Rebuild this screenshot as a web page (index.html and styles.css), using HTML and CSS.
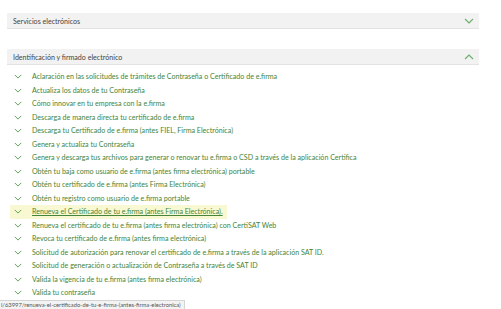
FILE: index.html
```html
<!DOCTYPE html>
<html lang="es">
<head>
<meta charset="utf-8">
<link rel="stylesheet" href="styles.css">
</head>
<body>
<div class="page">
  <div class="panel-head">
    <span>Servicios electrónicos</span>
    <svg class="caret" viewBox="0 0 10 6"><path d="M1 1 L5 5 L9 1"/></svg>
  </div>
  <div class="panel-head second">
    <span>Identificación y firmado electrónico</span>
    <svg class="caret" viewBox="0 0 10 6"><path d="M1 5 L5 1 L9 5"/></svg>
  </div>
  <ul class="list">
    <li><svg class="chev" viewBox="0 0 10 6"><path d="M1 1 L5 5 L9 1"/></svg><span>Aclaración en las solicitudes de trámites de Contraseña o Certificado de e.firma</span></li>
    <li><svg class="chev" viewBox="0 0 10 6"><path d="M1 1 L5 5 L9 1"/></svg><span>Actualiza los datos de tu Contraseña</span></li>
    <li><svg class="chev" viewBox="0 0 10 6"><path d="M1 1 L5 5 L9 1"/></svg><span>Cómo innovar en tu empresa con la e.firma</span></li>
    <li><svg class="chev" viewBox="0 0 10 6"><path d="M1 1 L5 5 L9 1"/></svg><span>Descarga de manera directa tu certificado de e.firma</span></li>
    <li><svg class="chev" viewBox="0 0 10 6"><path d="M1 1 L5 5 L9 1"/></svg><span>Descarga tu Certificado de e.firma (antes FIEL, Firma Electrónica)</span></li>
    <li><svg class="chev" viewBox="0 0 10 6"><path d="M1 1 L5 5 L9 1"/></svg><span>Genera y actualiza tu Contraseña</span></li>
    <li><svg class="chev" viewBox="0 0 10 6"><path d="M1 1 L5 5 L9 1"/></svg><span>Genera y descarga tus archivos para generar o renovar tu e.firma o CSD a través de la aplicación Certifica</span></li>
    <li><svg class="chev" viewBox="0 0 10 6"><path d="M1 1 L5 5 L9 1"/></svg><span>Obtén tu baja como usuario de e.firma (antes firma electrónica) portable</span></li>
    <li><svg class="chev" viewBox="0 0 10 6"><path d="M1 1 L5 5 L9 1"/></svg><span>Obtén tu certificado de e.firma (antes Firma Electrónica)</span></li>
    <li><svg class="chev" viewBox="0 0 10 6"><path d="M1 1 L5 5 L9 1"/></svg><span>Obtén tu registro como usuario de e.firma portable</span></li>
    <li class="hover"><svg class="chev" viewBox="0 0 10 6"><path d="M1 1 L5 5 L9 1"/></svg><span>Renueva el Certificado de tu e.firma (antes Firma Electrónica).</span></li>
    <li><svg class="chev" viewBox="0 0 10 6"><path d="M1 1 L5 5 L9 1"/></svg><span>Renueva el certificado de tu e.firma (antes firma electrónica) con CertiSAT Web</span></li>
    <li><svg class="chev" viewBox="0 0 10 6"><path d="M1 1 L5 5 L9 1"/></svg><span>Revoca tu certificado de e.firma (antes firma electrónica)</span></li>
    <li><svg class="chev" viewBox="0 0 10 6"><path d="M1 1 L5 5 L9 1"/></svg><span>Solicitud de autorización para renovar el certificado de e.firma a través de la aplicación SAT ID.</span></li>
    <li><svg class="chev" viewBox="0 0 10 6"><path d="M1 1 L5 5 L9 1"/></svg><span>Solicitud de generación o actualización de Contraseña a través de SAT ID</span></li>
    <li><svg class="chev" viewBox="0 0 10 6"><path d="M1 1 L5 5 L9 1"/></svg><span>Valida la vigencia de tu e.firma (antes firma electrónica)</span></li>
    <li><svg class="chev" viewBox="0 0 10 6"><path d="M1 1 L5 5 L9 1"/></svg><span>Valida tu contraseña</span></li>
  </ul>
</div>
<div class="status">l/63997/renueva-el-certificado-de-tu-e-firma-(antes-firma-electronica)</div>
</body>
</html>
```
FILE: styles.css
```css
html, body {
  margin: 0;
  padding: 0;
  background: #ffffff;
}
body {
  font-family: Lato, "Liberation Sans", sans-serif;
  width: 501px;
  height: 309px;
  overflow: hidden;
  position: relative;
}
.page {
  padding: 13px 22px 0 7px;
}
.panel-head {
  height: 15px;
  background: #f2f2f2;
  border-bottom: 1px solid #e3e3e3;
  display: flex;
  align-items: center;
  justify-content: space-between;
  padding: 0 5px 0 6px;
  font-size: 7.1px;
  color: #444444;
}
.panel-head span {
  padding-top: 2px;
}
.panel-head.second {
  margin-top: 20px;
}
.caret {
  width: 10px;
  height: 6px;
}
.caret path {
  fill: none;
  stroke: #6aae6a;
  stroke-width: 1.1;
}
.list {
  list-style: none;
  margin: 0;
  padding: 5px 0 0 7px;
}
.list li {
  height: 13.5px;
  display: flex;
  align-items: center;
  gap: 10px;
  font-size: 7.1px;
  color: #44853a;
  width: max-content;
  padding-right: 4px;
}
.chev {
  width: 8px;
  height: 5px;
  flex: none;
}
.chev path {
  fill: none;
  stroke: #4f9a45;
  stroke-width: 1.1;
}
.list li.hover {
  background: #f8f9d2;
  margin-left: -4px;
  padding-left: 4px;
}
.list li.hover span {
  text-decoration: underline;
}
.status {
  position: absolute;
  left: 0;
  bottom: 0;
  height: 8px;
  padding: 0 3px 0 1px;
  background: #f3f3f3;
  border-top: 1px solid #d4d4d4;
  border-right: 1px solid #d4d4d4;
  font-size: 5.8px;
  line-height: 8px;
  color: #555555;
  white-space: nowrap;
  width: 180px;
  overflow: hidden;
}
```
